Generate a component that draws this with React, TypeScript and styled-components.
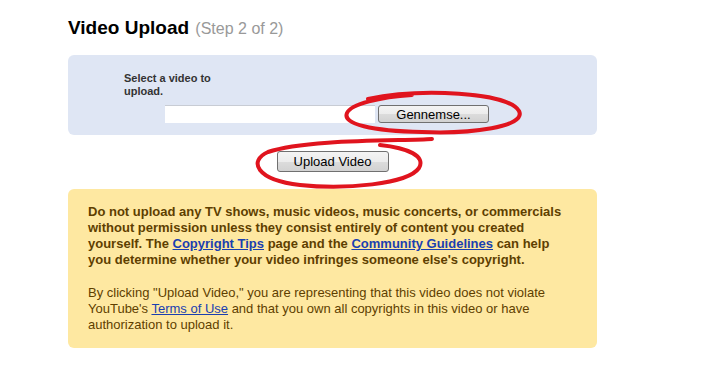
import React from "react";
import styled, { createGlobalStyle } from "styled-components";

const Global = createGlobalStyle`
  body {
    margin: 0;
    background: #fff;
    font-family: "Liberation Sans", Arial, sans-serif;
  }
`;

const Page = styled.div`
  position: relative;
  width: 714px;
  height: 391px;
  padding: 16px 0 0 68px;
  box-sizing: border-box;
`;

const Title = styled.h1`
  margin: 0 0 15px;
  font-size: 19px;
  line-height: 23px;
  font-weight: bold;
  color: #000;
  span {
    font-size: 16px;
    font-weight: normal;
    color: #999;
    margin-left: 1px;
  }
`;

const Panel = styled.div<{ $tone: "blue" | "yellow" }>`
  width: 529px;
  box-sizing: border-box;
  border-radius: 6px;
  background: ${(p) => (p.$tone === "blue" ? "#dfe6f4" : "#fee8a1")};
`;

const SelectPanel = styled(Panel)`
  height: 80px;
  padding: 17px 0 0 56px;
`;

const Label = styled.div`
  width: 110px;
  font-size: 11px;
  font-weight: bold;
  line-height: 13px;
  color: #333;
`;

const FileRow = styled.div`
  display: flex;
  gap: 3px;
  margin: 7px 0 0 41px;
`;

const FileInput = styled.div`
  width: 210px;
  height: 18px;
  background: #fff;
  border-top: 1px solid #c8ccd4;
  box-sizing: border-box;
`;

const Button = styled.button<{ $w: number; $h: number }>`
  width: ${(p) => p.$w}px;
  height: ${(p) => p.$h}px;
  padding: 0;
  border: 1px solid #707070;
  border-radius: 3px;
  background: linear-gradient(#f4f4f4 0%, #ececec 50%, #dcdcdc 51%, #d2d2d2 100%);
  font-family: "Liberation Sans", Arial, sans-serif;
  font-size: 13px;
  color: #000;
`;

const Center = styled.div`
  width: 529px;
  display: flex;
  justify-content: center;
  padding: 16px 0 17px;
`;

const NoticePanel = styled(Panel)`
  height: 159px;
  padding: 15px 0 0 20px;
`;

const Warning = styled.p`
  width: 484px;
  margin: 0 0 17px;
  font-size: 13px;
  font-weight: bold;
  line-height: 16px;
  color: #5e3f00;
`;

const Terms = styled.p`
  width: 484px;
  margin: 0;
  font-size: 13px;
  line-height: 16px;
  color: #5e3f00;
`;

const Link = styled.a`
  color: #1a3fb0;
  text-decoration: underline;
`;

const Marks = styled.svg`
  position: absolute;
  left: 0;
  top: 0;
  pointer-events: none;
`;

export default function App() {
  return (
    <>
      <Global />
      <Page>
        <Title>
          Video Upload <span>(Step 2 of 2)</span>
        </Title>
        <SelectPanel $tone="blue">
          <Label>Select a video to upload.</Label>
          <FileRow>
            <FileInput />
            <Button $w={111} $h={18}>Gennemse...</Button>
          </FileRow>
        </SelectPanel>
        <Center>
          <Button $w={112} $h={21}>Upload Video</Button>
        </Center>
        <NoticePanel $tone="yellow">
          <Warning>
            Do not upload any TV shows, music videos, music concerts, or commercials
            without permission unless they consist entirely of content you created
            yourself. The <Link href="#">Copyright Tips</Link> page and the{" "}
            <Link href="#">Community Guidelines</Link> can help you determine whether
            your video infringes someone else's copyright.
          </Warning>
          <Terms>
            By clicking "Upload Video," you are representing that this video does not
            violate YouTube's <Link href="#">Terms of Use</Link> and that you own all
            copyrights in this video or have authorization to upload it.
          </Terms>
        </NoticePanel>
        <Marks width="714" height="391" viewBox="0 0 714 391">
          <path
            d="M 368 99 C 420 88, 508 92, 519 111 C 527 127, 470 134, 422 132 C 372 131, 342 124, 347 113 C 351 104, 380 97, 412 95"
            fill="none"
            stroke="#e0141e"
            strokeWidth="4"
            strokeLinecap="round"
          />
          <path
            d="M 432 139 C 400 141, 305 139, 268 152 C 248 161, 256 180, 300 185 C 345 190, 408 184, 419 168 C 426 156, 408 148, 380 145"
            fill="none"
            stroke="#e0141e"
            strokeWidth="4"
            strokeLinecap="round"
          />
        </Marks>
      </Page>
    </>
  );
}
